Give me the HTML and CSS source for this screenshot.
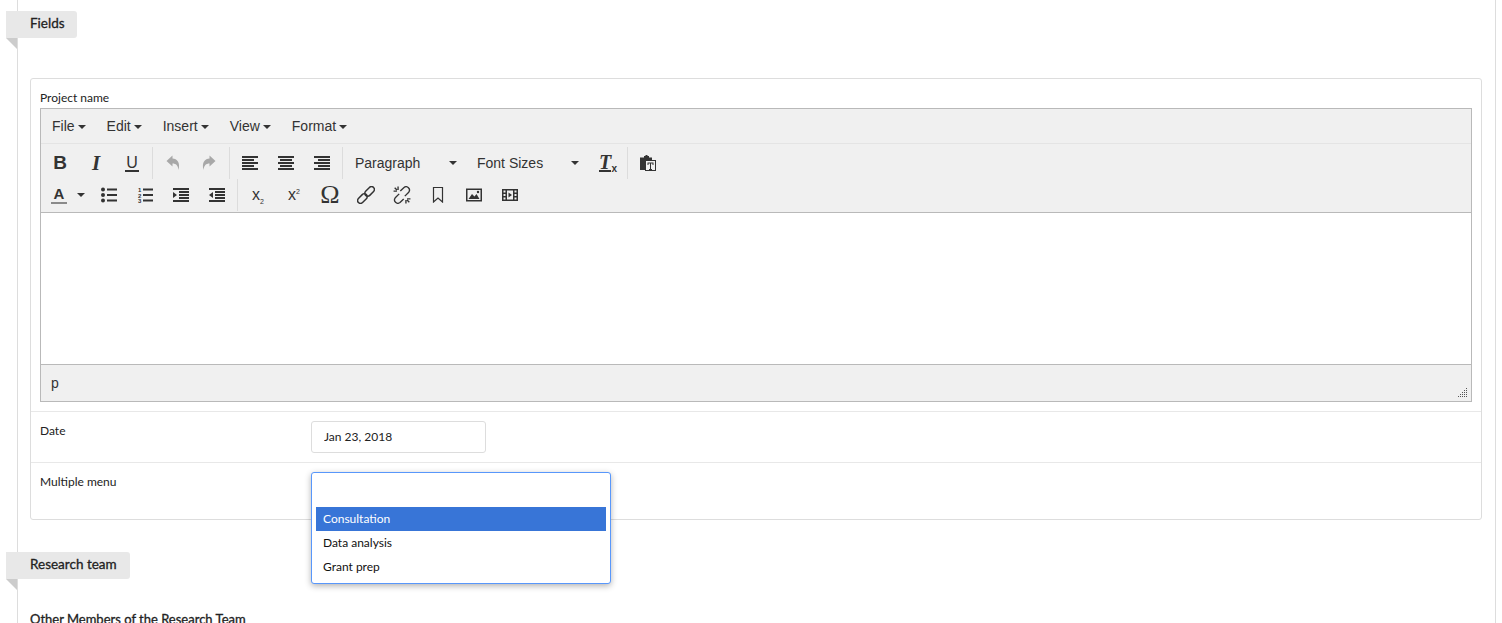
FILE: index.html
```html
<!DOCTYPE html>
<html lang="en">
<head>
    <meta charset="UTF-8">
    <meta name="viewport" content="width=device-width, initial-scale=1.0">
    <title>Project form</title>
    <link rel="stylesheet" href="styles.css">
</head>
<body>

<div class="page">
    <div class="ribbon">Fields</div>

    <div class="card">
        <div class="row row-editor">
            <div class="row-label">Project name</div>
            <div class="editor">
                <div class="menubar">
                    <div class="menu-item">File<span class="caret"></span></div>
                    <div class="menu-item">Edit<span class="caret"></span></div>
                    <div class="menu-item">Insert<span class="caret"></span></div>
                    <div class="menu-item">View<span class="caret"></span></div>
                    <div class="menu-item">Format<span class="caret"></span></div>
                </div>
                <div class="toolbar">
                    <div class="tb-row">
                        <div class="tb-group">
                            <div class="btn glyph-b">B</div>
                            <div class="btn glyph-i">I</div>
                            <div class="btn"><span class="glyph-u">U</span></div>
                        </div>
                        <div class="tb-group">
                            <div class="btn">
                                <svg class="icon" viewBox="0 0 16 16"><path fill="#a8a8a8" d="M1.500 6 L7.500 .5 V3.500 C12 3.500 15.500 7.500 13.500 15 C13 10.500 11 8.500 7.500 8.500 V11.500 Z"/></svg>
                            </div>
                            <div class="btn">
                                <svg class="icon" viewBox="0 0 16 16"><path fill="#a8a8a8" d="M14.500 6 L8.500 .5 V3.500 C4 3.500 .5 7.500 2.500 15 C3 10.500 5 8.500 8.500 8.500 V11.500 Z"/></svg>
                            </div>
                        </div>
                        <div class="tb-group">
                            <div class="btn">
                                <svg class="icon" viewBox="0 0 16 16"><path fill="#333" d="M0 1h16v2H0zM0 4h12v2H0zM0 7h16v2H0zM0 10h12v2H0zM0 13h16v2H0z"/></svg>
                            </div>
                            <div class="btn">
                                <svg class="icon" viewBox="0 0 16 16"><path fill="#333" d="M0 1h16v2H0zM2 4h12v2H2zM0 7h16v2H0zM2 10h12v2H2zM0 13h16v2H0z"/></svg>
                            </div>
                            <div class="btn">
                                <svg class="icon" viewBox="0 0 16 16"><path fill="#333" d="M0 1h16v2H0zM4 4h12v2H4zM0 7h16v2H0zM4 10h12v2H4zM0 13h16v2H0z"/></svg>
                            </div>
                        </div>
                        <div class="tb-group">
                            <div class="listbox">Paragraph<span class="caret"></span></div>
                            <div class="listbox">Font Sizes<span class="caret"></span></div>
                            <div class="btn">
                                <span class="glyph-tx">T<span class="glyph-tx-x">x</span></span>
                            </div>
                        </div>
                        <div class="tb-group tb-last">
                            <div class="btn">
                                <svg class="icon" viewBox="0 0 16 16">
                                    <path fill="#333" d="M0 2.500h4V1h1.500V0h2v1H9v1.500h3V5H5v10H0z"/>
                                    <path fill="#333" fill-rule="evenodd" d="M5 5h11v11H5zM6 6v9h9V6z"/>
                                    <path fill="#333" d="M7.500 7.500h6v2.500h-1V8.500h-1.500v5.500H12v1H9v-1h1V8.500H8.500V10h-1z"/>
                                </svg>
                            </div>
                        </div>
                    </div>
                    <div class="tb-row">
                        <div class="tb-group">
                            <div class="color-btn">
                                <span class="glyph-a">A</span><span class="caret"></span>
                            </div>
                            <div class="btn">
                                <svg class="icon" viewBox="0 0 16 16">
                                    <circle fill="#333" cx="2" cy="2.500" r="2"/><circle fill="#333" cx="2" cy="8" r="2"/><circle fill="#333" cx="2" cy="13.500" r="2"/>
                                    <path fill="#333" d="M6 1.500h10v2H6zM6 7h10v2H6zM6 12.500h10v2H6z"/>
                                </svg>
                            </div>
                            <div class="btn">
                                <svg class="icon" viewBox="0 0 16 16">
                                    <text class="icon-digits" x="1" y="5">1</text>
                                    <text class="icon-digits" x="1" y="10.500">2</text>
                                    <text class="icon-digits" x="1" y="16">3</text>
                                    <path fill="#333" d="M6 1.500h10v2H6zM6 7h10v2H6zM6 12.500h10v2H6z"/>
                                </svg>
                            </div>
                            <div class="btn">
                                <svg class="icon" viewBox="0 0 16 16"><path fill="#333" d="M0 1h16v2H0zM6 4h10v2H6zM6 7h10v2H6zM6 10h10v2H6zM0 13h16v2H0zM0 5l4 3-4 3z"/></svg>
                            </div>
                            <div class="btn">
                                <svg class="icon" viewBox="0 0 16 16"><path fill="#333" d="M0 1h16v2H0zM6 4h10v2H6zM6 7h10v2H6zM6 10h10v2H6zM0 13h16v2H0zM4 5L0 8l4 3z"/></svg>
                            </div>
                        </div>
                        <div class="tb-group tb-last">
                            <div class="btn"><span class="glyph-script">x<sub>2</sub></span></div>
                            <div class="btn"><span class="glyph-script">x<sup>2</sup></span></div>
                            <div class="btn glyph-omega">Ω</div>
                            <div class="btn">
                                <svg class="icon icon-wide" viewBox="0 0 16 16" fill="none" stroke="#333" stroke-width="1.300">
                                    <rect x="-5" y="-2.600" width="10" height="5.200" rx="2.600" transform="translate(4.800 11.200) rotate(-45)"/>
                                    <rect x="-5" y="-2.600" width="10" height="5.200" rx="2.600" transform="translate(11.200 4.800) rotate(-45)"/>
                                </svg>
                            </div>
                            <div class="btn">
                                <svg class="icon icon-wide" viewBox="0 0 16 16" fill="none" stroke="#333" stroke-width="1.200">
                                    <path d="M5.500 7 L2 10.500 a3 3 0 0 0 4.200 4.200 L9.500 11.500"/>
                                    <path d="M10.500 9 L14 5.500 a3 3 0 0 0 -4.200 -4.200 L6.500 4.500"/>
                                    <path d="M.5 4.500h3M4.500 .5v3M1.500 1.500l2 2M12.500 11.500h3M11.500 12.500v3M12.500 12.500l2 2"/>
                                </svg>
                            </div>
                            <div class="btn">
                                <svg class="icon" viewBox="0 0 16 16"><path fill="none" stroke="#333" stroke-width="1.200" d="M3.500 .5h9v14.500L8 11 3.500 15z"/></svg>
                            </div>
                            <div class="btn">
                                <svg class="icon" viewBox="0 0 16 16">
                                    <path fill="#333" fill-rule="evenodd" d="M0 1.500h16v13H0zM1.500 3v10h13V3z"/>
                                    <path fill="#333" d="M2.500 12l3.500-5 2.500 2.500L10.500 7l3 5z"/>
                                    <circle fill="#333" cx="12" cy="5" r="1.200"/>
                                </svg>
                            </div>
                            <div class="btn">
                                <svg class="icon" viewBox="0 0 16 16">
                                    <path fill="#333" fill-rule="evenodd" d="M0 2h16v12H0zM1.500 3.500v2h2v-2zM1.500 7v2h2V7zM1.500 10.500v2h2v-2zM12.500 3.500v2h2v-2zM12.500 7v2h2V7zM12.500 10.500v2h2v-2zM5 3.500v9h6v-9z"/>
                                    <path fill="#333" d="M6.500 5.500L10 8l-3.500 2.500z"/>
                                </svg>
                            </div>
                        </div>
                    </div>
                </div>
                <div class="edit-area"></div>
                <div class="statusbar">
                    p
                    <svg class="resize-handle" viewBox="0 0 10 10">
                        <path fill="#555" d="M8 0h1v1H8zM6 2h1v1H6zM8 2h1v1H8zM4 4h1v1H4zM6 4h1v1H6zM8 4h1v1H8zM2 6h1v1H2zM4 6h1v1H4zM6 6h1v1H6zM8 6h1v1H8zM0 8h1v1H0zM2 8h1v1H2zM4 8h1v1H4zM6 8h1v1H6zM8 8h1v1H8z"/>
                    </svg>
                </div>
            </div>
        </div>

        <div class="row row-field">
            <div class="field-label">Date</div>
            <input class="date-input" type="text" value="Jan 23, 2018">
        </div>

        <div class="row row-field row-last">
            <div class="field-label">Multiple menu</div>
            <div class="select-wrap">
                <div class="dropdown">
                    <div class="dropdown-search"></div>
                    <div class="option option-active">Consultation</div>
                    <div class="option">Data analysis</div>
                    <div class="option">Grant prep</div>
                </div>
            </div>
        </div>
    </div>

    <div class="ribbon ribbon-second">Research team</div>

    <div class="sub-title">Other Members of the Research Team</div>
</div>

</body>
</html>
```

FILE: styles.css
```css
html, body {
    margin: 0;
    height: 623px;
    overflow: hidden;
    background: #fff;
}
body {
    font-family: "Lato", "Liberation Sans", sans-serif;
    font-size: 12px;
    color: #222;
}
.page {
    margin: 0 6px 0 17px;
    padding: 11px 13px 0 12px;
    border-left: 1px solid #ddd;
    border-right: 1px solid #ddd;
    min-height: 623px;
    box-sizing: border-box;
}

/* Section ribbons */
.ribbon {
    position: relative;
    display: table;
    height: 27px;
    line-height: 25px;
    margin-left: -24px;
    padding: 0 13px 0 24px;
    background: #e8e8e8;
    border-radius: 0 3px 3px 0;
    font-size: 13.5px;
    -webkit-text-stroke: 0.3px #222;
    color: #222;
}
.ribbon:first-child {
    padding-right: 12px;
}
.ribbon::after {
    content: "";
    position: absolute;
    left: 0;
    top: 27px;
    border-top: 11px solid #ccc;
    border-left: 11px solid transparent;
}
.ribbon-second {
    margin-top: 32px;
}
.sub-title {
    margin-top: 31px;
    font-size: 13px;
    -webkit-text-stroke: 0.3px #222;
    line-height: 18px;
}

/* Fields card */
.card {
    margin-top: 40px;
    border: 1px solid #ddd;
    border-radius: 3px;
}
.row {
    padding: 9px 9px;
    border-bottom: 1px solid #e8e8e8;
}
.row-last {
    border-bottom: none;
}
.row-editor {
    padding-top: 10px;
}
.row-label {
    line-height: 18px;
    margin-bottom: 1px;
}
.row-field {
    display: flex;
}
.field-label {
    width: 271px;
    padding-top: 1px;
    line-height: 18px;
}
.date-input {
    width: 175px;
    height: 32px;
    padding: 0 12px 2px;
    box-sizing: border-box;
    border: 1px solid #ddd;
    border-radius: 3px;
    font-family: inherit;
    font-size: 12px;
    color: #222;
}

/* Dropdown */
.select-wrap {
    position: relative;
    width: 300px;
    height: 38px;
}
.dropdown {
    position: absolute;
    left: 0;
    top: 0;
    width: 300px;
    height: 112px;
    padding: 0 4px;
    box-sizing: border-box;
    background: #fff;
    border: 1px solid #5897fb;
    border-radius: 3px;
    box-shadow: 0 2px 6px rgba(0, 0, 0, 0.3);
}
.dropdown-search {
    height: 34px;
}
.option {
    height: 24px;
    line-height: 24px;
    padding: 0 7px;
    color: #111;
}
.option-active {
    background: #3875d7;
    color: #fff;
}

/* Editor */
.editor {
    height: 294px;
    box-sizing: border-box;
    border: 1px solid #b9b9b9;
    font-family: "Liberation Sans", Arial, sans-serif;
    font-size: 14px;
    color: #333;
    display: flex;
    flex-direction: column;
}
.caret {
    display: inline-block;
    width: 0;
    height: 0;
    border-top: 4px solid #333;
    border-left: 4px solid transparent;
    border-right: 4px solid transparent;
    vertical-align: middle;
}
.menubar {
    display: flex;
    height: 35px;
    box-sizing: border-box;
    padding-left: 1px;
    background: #f0f0f0;
    border-bottom: 1px solid #e4e4e4;
    line-height: 34px;
}
.menu-item {
    padding: 0 10px;
    margin-right: 1px;
}
.menu-item .caret {
    margin-left: 3px;
}
.toolbar {
    height: 69px;
    box-sizing: border-box;
    padding: 3px 0 0 1px;
    background: #f0f0f0;
    border-bottom: 1px solid #b9b9b9;
}
.tb-row {
    display: flex;
    height: 32px;
}
.tb-group {
    display: flex;
    padding-right: 2px;
    margin-right: 2px;
    border-right: 1px solid #dcdcdc;
}
.tb-last {
    border-right: none;
}
.btn {
    width: 36px;
    height: 32px;
    display: flex;
    align-items: center;
    justify-content: center;
}
.icon {
    width: 16px;
    height: 16px;
    display: block;
}
.icon-wide {
    width: 18px;
    height: 18px;
}
.icon-digits {
    font-family: "Liberation Sans", sans-serif;
    font-size: 6px;
    font-weight: bold;
    fill: #333;
}
.glyph-b {
    font-size: 19px;
    font-weight: bold;
}
.glyph-i {
    font-family: "Liberation Serif", serif;
    font-size: 21px;
    font-weight: bold;
    font-style: italic;
}
.glyph-u {
    font-size: 16px;
    line-height: 15px;
    padding: 0 1px;
    border-bottom: 2px solid #333;
}
.glyph-tx {
    position: relative;
    font-family: "Liberation Serif", serif;
    font-size: 20px;
    font-weight: bold;
    font-style: italic;
    line-height: 16px;
    border-bottom: 2px solid #333;
    margin-left: -4px;
}
.glyph-tx-x {
    position: absolute;
    right: -6px;
    bottom: -4px;
    font-family: "Liberation Sans", sans-serif;
    font-size: 10px;
    font-style: normal;
    line-height: 10px;
}
.glyph-script {
    font-size: 16px;
    line-height: 16px;
}
.glyph-script sub,
.glyph-script sup {
    font-size: 7px;
    line-height: 0;
}
.glyph-omega {
    font-family: "Liberation Serif", serif;
    font-size: 26px;
}
.listbox {
    width: 122px;
    height: 32px;
    box-sizing: border-box;
    padding-left: 10px;
    line-height: 32px;
    position: relative;
}
.listbox .caret {
    position: absolute;
    right: 10px;
    top: 14px;
}
.color-btn {
    width: 49px;
    height: 32px;
    box-sizing: border-box;
    display: flex;
    align-items: center;
    padding-left: 9px;
}
.color-btn .caret {
    margin-left: 10px;
}
.glyph-a {
    width: 16px;
    text-align: center;
    font-size: 15px;
    font-weight: bold;
    line-height: 16px;
    border-bottom: 2px solid #8a8a8a;
}
.edit-area {
    flex: 1;
    background: #fff;
}
.statusbar {
    position: relative;
    height: 37px;
    box-sizing: border-box;
    padding-left: 10px;
    background: #f0f0f0;
    border-top: 1px solid #b9b9b9;
    line-height: 36px;
}
.resize-handle {
    position: absolute;
    right: 3px;
    bottom: 3px;
    width: 10px;
    height: 10px;
}
```
